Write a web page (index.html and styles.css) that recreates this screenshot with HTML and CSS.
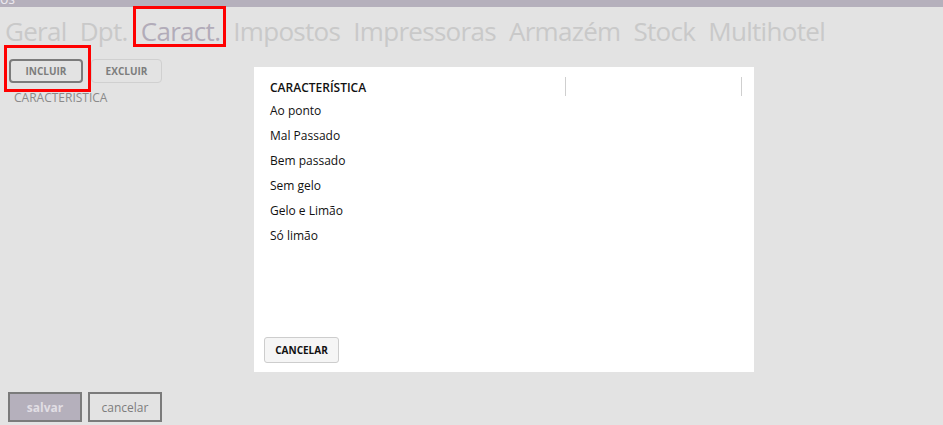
FILE: index.html
```html
<!DOCTYPE html>
<html lang="pt">
<head>
<meta charset="utf-8">
<link rel="stylesheet" href="styles.css">
</head>
<body>
<div class="topbar"><span class="topbar-title">Produtos</span></div>
<div class="page">
  <nav class="tabs">
    <span class="tab">Geral</span>
    <span class="tab">Dpt.</span>
    <span class="tab active">Caract.</span>
    <span class="tab">Impostos</span>
    <span class="tab">Impressoras</span>
    <span class="tab">Armazém</span>
    <span class="tab">Stock</span>
    <span class="tab">Multihotel</span>
  </nav>
  <div class="toolbar">
    <button class="btn btn-primary">INCLUIR</button>
    <button class="btn btn-light">EXCLUIR</button>
  </div>
  <div class="list-label">CARACTERISTICA</div>
</div>
<div class="footer">
  <button class="fbtn fbtn-save">salvar</button>
  <button class="fbtn fbtn-cancel">cancelar</button>
</div>

<div class="modal">
  <div class="grid-head">
    <span class="col col-main">CARACTERÍSTICA</span>
    <span class="col col-second"></span>
  </div>
  <ul class="rows">
    <li>Ao ponto</li>
    <li>Mal Passado</li>
    <li>Bem passado</li>
    <li>Sem gelo</li>
    <li>Gelo e Limão</li>
    <li>Só limão</li>
  </ul>
  <div class="modal-foot">
    <button class="btn-cancelar">CANCELAR</button>
  </div>
</div>

<div class="highlight hl-tab"></div>
<div class="highlight hl-btn"></div>
</body>
</html>
```

FILE: styles.css
```css
* { box-sizing: border-box; }
html, body {
  margin: 0;
  padding: 0;
  width: 943px;
  height: 425px;
  overflow: hidden;
}
body {
  background: #e3e3e3;
  font-family: "Open Sans", "Noto Sans", sans-serif;
  position: relative;
}
.topbar {
  height: 7px;
  background: #b5b0bc;
  overflow: hidden;
  position: relative;
}
.topbar-title {
  position: absolute;
  right: 928px;
  top: -11px;
  font-size: 14px;
  color: #ece9ef;
  white-space: nowrap;
}
.page {
  padding: 0 0 0 5px;
}
.tabs {
  display: flex;
  gap: 13px;
  height: 43px;
  align-items: center;
  padding-top: 4px;
}
.tab {
  font-size: 26px;
  color: #c9c9c9;
  letter-spacing: -0.7px;
}
.tab.active {
  color: #b2acb9;
}
.toolbar {
  display: flex;
  gap: 8px;
  padding: 9px 0 0 4px;
}
.btn {
  font-family: "Open Sans", sans-serif;
  font-size: 10px;
  font-weight: 700;
  height: 24px;
  width: 74px;
  border-radius: 4px;
  color: #7d7d7d;
  background: #e3e3e3;
  padding: 0;
}
.btn-primary {
  border: 2px solid #7b7b7b;
}
.btn-light {
  border: 1px solid #d0d0d0;
  width: 71px;
}
.list-label {
  padding: 6px 0 0 9px;
  font-size: 12px;
  color: #8a8a8a;
}
.footer {
  position: absolute;
  left: 8px;
  top: 392px;
  display: flex;
  gap: 6px;
}
.fbtn {
  width: 74px;
  height: 30px;
  border: 2px solid #7b7b7b;
  font-family: "Open Sans", sans-serif;
  font-size: 12px;
  padding: 0;
}
.fbtn-save {
  background: #b5b0bc;
  color: #e1dee4;
  font-weight: 700;
}
.fbtn-cancel {
  background: #e3e3e3;
  color: #7d7d7d;
}
.modal {
  position: absolute;
  left: 254px;
  top: 67px;
  width: 500px;
  height: 305px;
  background: #ffffff;
  display: flex;
  flex-direction: column;
}
.grid-head {
  display: flex;
  margin-top: 10px;
  height: 19px;
  padding-left: 16px;
}
.col {
  font-size: 12px;
  font-weight: 600;
  color: #111;
  line-height: 21px;
  border-right: 1px solid #cfcfcf;
}
.col-main { width: 296px; }
.col-second { width: 176px; }
.rows {
  list-style: none;
  margin: 4px 0 0 0;
  padding: 0 0 0 16px;
  flex: 1;
}
.rows li {
  font-size: 12px;
  color: #111;
  height: 25px;
  line-height: 22px;
}
.modal-foot {
  padding: 0 0 9px 10px;
}
.btn-cancelar {
  width: 75px;
  height: 26px;
  background: #f5f5f5;
  border: 1px solid #cdcdcd;
  border-radius: 3px;
  font-family: "Open Sans", sans-serif;
  font-weight: 700;
  font-size: 10px;
  color: #111;
  padding: 0;
}
.highlight {
  position: absolute;
  border: 3px solid #ff0000;
}
.hl-tab {
  left: 133px;
  top: 6px;
  width: 93px;
  height: 41px;
}
.hl-btn {
  left: 4px;
  top: 45px;
  width: 87px;
  height: 47px;
}
```
